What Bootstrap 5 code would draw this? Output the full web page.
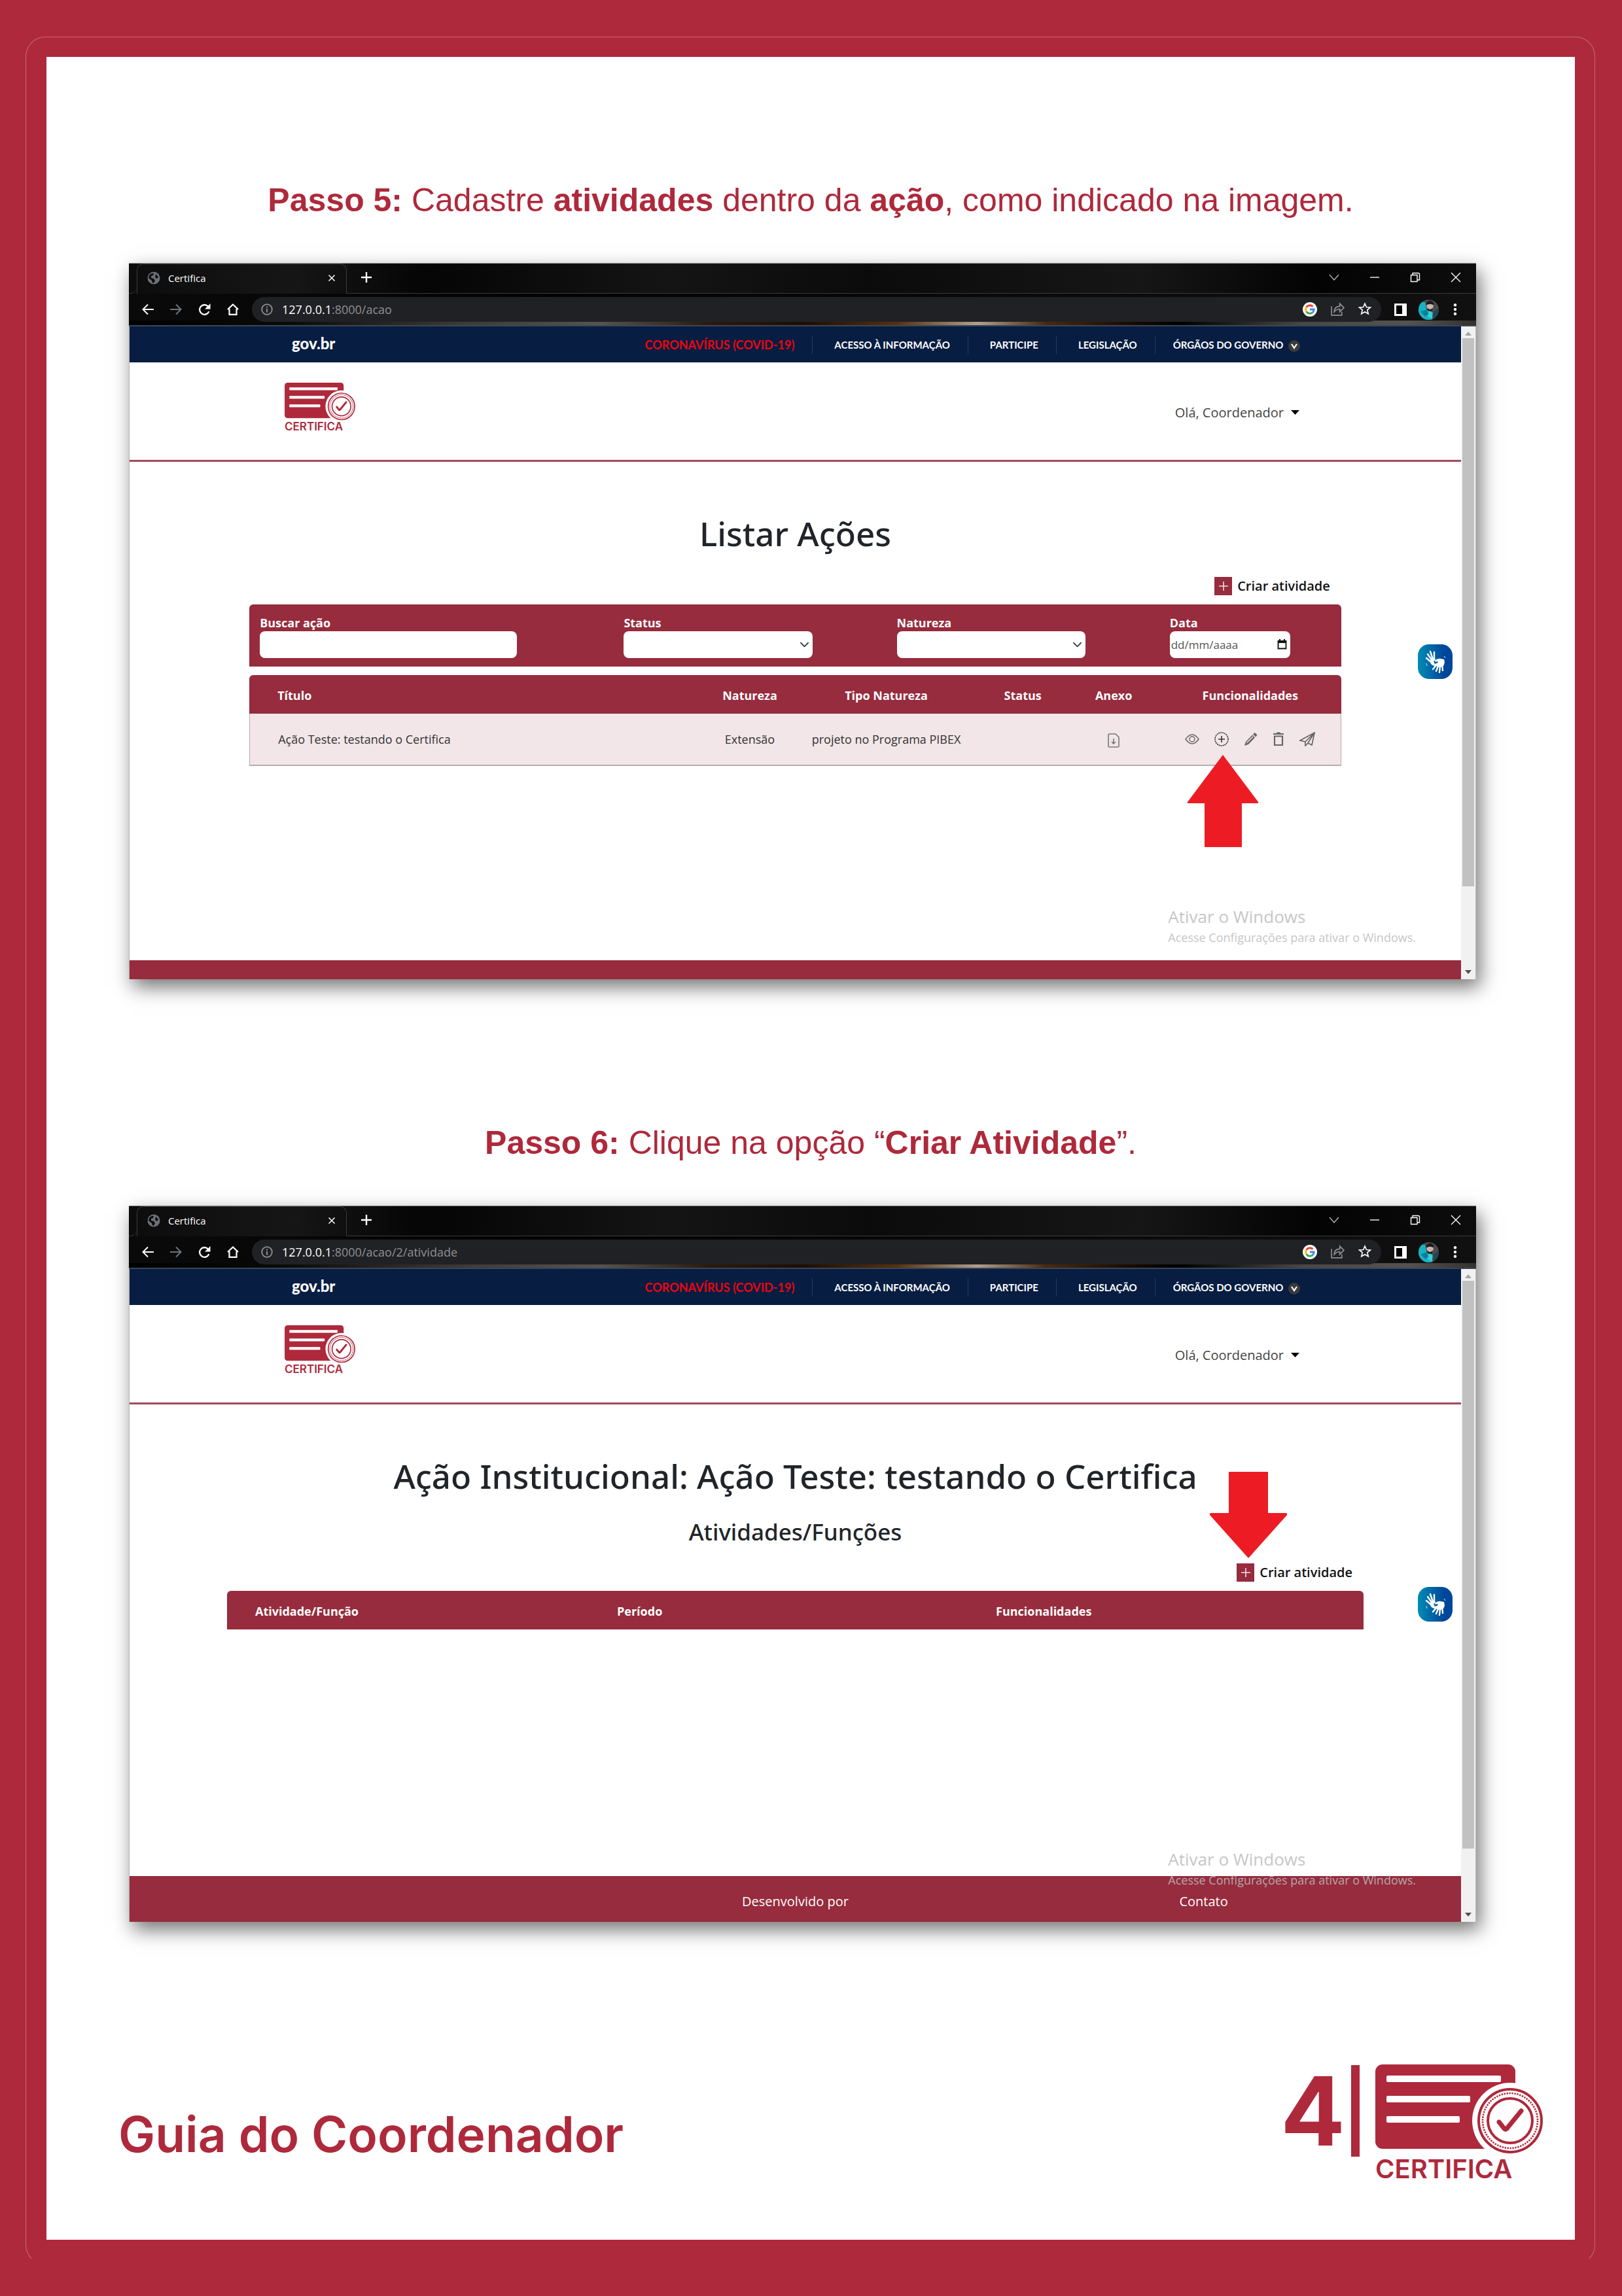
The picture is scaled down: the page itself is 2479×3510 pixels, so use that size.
<!DOCTYPE html>
<html lang="pt-BR">
<head>
<meta charset="utf-8">
<meta name="viewport" content="width=device-width, initial-scale=1">
<title>Guia do Coordenador - Certifica</title>
<link href="https://cdn.jsdelivr.net/npm/bootstrap@5.3.0/dist/css/bootstrap.min.css" rel="stylesheet">
<style>
  :root { --brand: #ae293b; --wine: #962c3d; --navy: #071d41; }
  body { background: #fff; font-family: "Open Sans", "Noto Sans", sans-serif; color: #212529; }
  .sheet { background: var(--brand); padding: 87px 72px 88px 71px; }
  .sheet::before { content: ""; position: absolute; inset: 56px 41px 50px 39px; border: 1px solid rgba(255,255,255,.3); border-bottom-color: transparent; border-radius: 30px; }
  .paper { background: #fff; padding: 189px 151px 88px 126px; }
  .step { font: 400 50px/60px "Liberation Sans", Arial, sans-serif; color: var(--brand); text-align: center; margin: 0 -25px 66px 0; }
  .step-next { margin-top: 220px; }

  /* browser window */
  .browser { box-shadow: 6px 12px 28px rgba(0,0,0,.55); border-top: 1px solid #8a8a8a; }
  .tabstrip { background: linear-gradient(90deg, #0c0c0c, #161616 12%, #050505 22%, #141414 40%, #0b0b0b 55%, #161616 75%, #030303 88%, #0d0d0d); height: 46px; color: #fff; }
  .tab-edge { width: 12px; border-bottom: 1px solid #3a3a3a; border-right: 0; border-radius: 0 0 10px 0; }
  .tab-open { width: 321px; padding: 0 16px 3px 15px; border: 1px solid #3a3a3a; border-bottom: 0; border-radius: 10px 10px 0 0; font-size: 15px; gap: 12px; }
  .tab-rest { border-bottom: 1px solid #3a3a3a; padding: 0 23px 4px 22px; }
  .wbtn { background: none; border: 0; padding: 0; line-height: 0; color: inherit; }
  .toolbar { height: 50px; padding: 0 25px 0 20px; color: #fff; border-bottom: 2px solid #3c4659;
    background: linear-gradient(90deg, #000 0, #0d0b09 12%, #3b3733 24%, #57534e 35%, #2b1a0e 43%, #1d0e04 50%, #57300f 57%, #b0a08e 63%, #4a2a0e 68%, #1a0d04 74%, #000 78%, #4a4643 87%, #55524f 95%, #33302e 100%) bottom/100% 7px no-repeat, linear-gradient(90deg, #0a0a0a, #020202 30%, #101010); }
  .navbtns { gap: 25px; width: 168px; }
  .omnibox { background: #202124; border-radius: 19px; height: 38px; padding: 0 15px 0 14px; gap: 14px; font-size: 18px; color: #8d9094; }
  .omnibox b { font-weight: 400; color: #fff; }
  .omni-icons { gap: 21px; }
  .tool-icons { gap: 18px; padding-left: 20px; }
  .viewport-row { min-height: 998px; }
  .page-side { border-left: 1px solid #b5b5b5; background: #fff; }
  .scroller { flex: 0 0 23px; background: #f1f1f1; padding: 8px 2px; border-right: 1px solid #bbb; }
  .thumb { background: #c1c1c1; width: 100%; height: 838px; margin: 4px 0 auto; }
  .thumb-long { height: 868px; }

  /* site */
  .govbar { background: var(--navy); height: 55px; padding: 0 246px 0 248px; }
  .govlogo { font: 900 24px/50px Lato, sans-serif; color: #fff; text-decoration: none; padding-bottom: 3px; }
  .govlinks a { font: 700 15px/28px Lato, sans-serif; color: #fff; text-decoration: none; display: block; padding: 0 27px 0 33px; border-right: 1px solid #2b3b5c; }
  .govlinks li:first-child a { color: #ee0410; font-size: 18px; }
  .govlinks li:last-child a { padding: 0; padding-left: 27px; border: 0; }
  .sitehead { height: 152px; border-bottom: 3px solid #a14a59; padding: 0 247px 0 237px; }
  .brandmark { color: var(--brand); font-family: Inter, sans-serif; font-weight: 600; }
  .brandmark svg { display: block; }
  .brandmark-sm { width: 108px; font-size: 17px; line-height: 17px; padding-bottom: 12px; }
  .brandmark-lg { width: 256px; font-size: 40px; line-height: 40px; }
  .hello { background: none; border: 0; padding: 5px 0 0; font-size: 20px; line-height: 30px; color: #444; gap: 11px; }
  .inner { padding: 77px 9% 0; }
  .inner-wide { padding: 77px 149px 0; }
  .ttl { font: 500 51px/64px "Noto Sans", sans-serif; text-align: center; margin: 0; }
  .subttl { font: 500 35px/44px "Noto Sans", sans-serif; text-align: center; margin: 32px 0 0; }
  .create { gap: 8px; color: #111; font-size: 20px; line-height: 28px; font-weight: 600; text-decoration: none; margin-right: 17px; }
  .create span { background: var(--wine); width: 27px; height: 28px; }
  .filters { background: var(--wine); border-radius: 6px 6px 0 0; padding: 15px 0 13px; margin-bottom: 13px; --bs-gutter-x: 32px; }
  .filters label { color: #fff; font-weight: 700; font-size: 18px; line-height: 26px; display: block; }
  .filters .form-control, .filters .form-select { width: 75%; height: 41px; border: 0; border-radius: 8px; padding: 0 2px; font-size: 17px; background-color: #fff; }
  .filters .form-select { background-size: 15px; background-position: right 5px center; }
  .filters .datebox { width: 75%; }
  .filters .datebox .form-control { width: 100%; }
  .datebox svg { position: absolute; right: 5px; top: 12px; }
  .form-control::placeholder { color: #555; }
  .grid { width: 100%; table-layout: fixed; border-collapse: separate; border-spacing: 0; }
  .grid th { background: var(--wine); color: #fff; font-weight: 700; font-size: 18px; height: 59px; padding: 4px 0 0 17px; }
  .grid th:first-child { border-radius: 6px 0 0 0; }
  .grid th:last-child { border-radius: 0 6px 0 0; }
  .grid th:first-child, .grid td:first-child { padding-left: 43px; }
  .grid td { background: #f2e6e8; height: 80px; font-size: 18px; color: #333; border-bottom: 2px solid #b5acae; white-space: nowrap; }
  .grid td:first-child { border-left: 1px solid #b5acae; }
  .grid td:last-child { border-right: 1px solid #b5acae; }
  .grid-center th:not(:first-child) { text-align: center; padding-left: 0; }
  .acts { gap: 23px; color: #666; }
  .sitefoot { background: var(--wine); height: 29px; }
  .sitefoot-tall { height: 70px; padding: 8px 4% 0; color: #fff; font-size: 20px; }
  .vlibras { right: 13px; top: 486px; width: 53px; height: 53px; border: 0; border-radius: 17px; padding: 0; background: linear-gradient(90deg, #008cb4, #00479b 75%); }
  .winmark { left: 78%; bottom: 48px; color: #bdbdbd; font-size: 18px; line-height: 32px; white-space: nowrap; opacity: .85; }
  .winmark strong { font-weight: 400; font-size: 26px; display: block; }
  .arrow-up { right: 309px; top: 654px; }
  .arrow-down { right: 266px; top: 310px; }

  /* sheet footer */
  .colophon { margin: 218px -102px 0 -16px; color: var(--brand); font-family: Inter, sans-serif; }
  .guide { font-size: 75px; line-height: 88px; font-weight: 600; margin-bottom: 29px; }
  .pagenum { font-size: 146px; line-height: 140px; font-weight: 700; gap: 9px; padding-top: 1px; }
  .pagenum i { width: 13px; height: 140px; background: var(--brand); }
</style>
</head>
<body>
<svg width="0" height="0" class="position-absolute" aria-hidden="true">
  <symbol id="certifica" viewBox="0 0 256 140">
    <rect width="214" height="129" rx="11" fill="#ae293b"/>
    <rect x="17" y="17" width="175" height="10" rx="2" fill="#fff"/>
    <rect x="17" y="48" width="128" height="10" rx="2" fill="#fff"/>
    <rect x="17" y="79" width="112" height="10" rx="2" fill="#fff"/>
    <circle cx="206" cy="86" r="58" fill="#fff"/>
    <g fill="none" stroke="#ae293b">
      <circle cx="206" cy="86" r="48" stroke-width="4"/>
      <circle cx="206" cy="86" r="42" stroke-width="2.6" stroke-dasharray="2.4 1.6"/>
      <circle cx="206" cy="86" r="34" stroke-width="4"/>
      <path d="M189 88l8 10q2 2 4 0l22-27" stroke-width="7" stroke-linecap="round" stroke-linejoin="round"/>
    </g>
  </symbol>
  <symbol id="globe" viewBox="0 0 20 20"><circle cx="10" cy="10" r="9.5" fill="#6d7177"/><path d="M3 6q3-4 7-3l-1 3-3 1v3l4 1 2 3-2 4q-3-1-3-4L2 10zM13 4l4 4-2 3-3-2z" fill="#0d0d0d"/></symbol>
  <symbol id="x" viewBox="0 0 16 16"><path d="M2 2l12 12M14 2L2 14" stroke="currentColor" stroke-width="2" fill="none"/></symbol>
  <symbol id="xthin" viewBox="0 0 16 16"><path d="M1 1l14 14M15 1L1 15" stroke="currentColor" stroke-width="1.4" fill="none"/></symbol>
  <symbol id="plus" viewBox="0 0 16 16"><path d="M8 0v16M0 8h16" stroke="currentColor" stroke-width="2.4" fill="none"/></symbol>
  <symbol id="chev" viewBox="0 0 16 16"><path d="M1 4l7 8 7-8" stroke="#bbb" stroke-width="1.3" fill="none"/></symbol>
  <symbol id="restore" viewBox="0 0 16 16"><path d="M1.500 4.500h9.500v10h-9.500zM4 4V1.500h8.500q2 0 2 2V12H11" stroke="currentColor" stroke-width="1.4" fill="none"/></symbol>
  <symbol id="back" viewBox="0 0 18 18"><path d="M18 9H2M9 1.500L1.500 9 9 16.500" stroke="currentColor" stroke-width="2" fill="none"/></symbol>
  <symbol id="fwd" viewBox="0 0 18 18"><path d="M0 9h16M9 1.500L16.500 9 9 16.500" stroke="currentColor" stroke-width="2" fill="none"/></symbol>
  <symbol id="reload" viewBox="0 0 18 18"><path d="M15.500 11.500A7 7 0 1 1 14 4" stroke="currentColor" stroke-width="2.200" fill="none"/><path d="M17.500 0v8h-8z" fill="currentColor"/></symbol>
  <symbol id="home" viewBox="0 0 18 18"><path d="M1 9l8-7.500L17 9M3.500 8v8.800h11V8" stroke="currentColor" stroke-width="2.200" fill="none"/></symbol>
  <symbol id="info" viewBox="0 0 18 18"><circle cx="9" cy="9" r="7.800" stroke="currentColor" stroke-width="1.800" fill="none"/><path d="M9 8v5.500M9 4.500v2" stroke="currentColor" stroke-width="2"/></symbol>
  <symbol id="goog" viewBox="0 0 22 22"><circle cx="11" cy="11" r="11" fill="#fff"/><g fill="none" stroke-width="2.800"><path d="M5.600 7.800A6.200 6.200 0 0 1 15.500 6.800" stroke="#ea4335"/><path d="M5.600 14.200a6.200 6.200 0 0 1 0-6.400" stroke="#fbbc05"/><path d="M5.600 14.200a6.200 6.200 0 0 0 9.600 1.400" stroke="#34a853"/><path d="M11 11h6.200q0 3-2 4.600" stroke="#4285f4"/></g></symbol>
  <symbol id="share" viewBox="0 0 20 20"><path d="M1 6v13h15v-5M5 14q0-8 8-8V2l6 6-6 6v-4q-5 0-8 4z" stroke="currentColor" stroke-width="1.600" fill="none"/></symbol>
  <symbol id="star" viewBox="0 0 20 20"><path d="M10 2l2.400 5.500 6 .500-4.600 3.900 1.400 5.900-5.200-3.100-5.200 3.100 1.400-5.900L1.600 8l6-.500z" stroke="currentColor" stroke-width="1.700" fill="none"/></symbol>
  <symbol id="panel" viewBox="0 0 19 19"><path d="M1.500 1.500h16v16h-16z" stroke="#fff" stroke-width="3" fill="#000"/><path d="M12 1h6v17h-6z" fill="#fff"/></symbol>
  <symbol id="face" viewBox="0 0 30 30"><clipPath id="fc"><circle cx="15" cy="15" r="15"/></clipPath><g clip-path="url(#fc)"><path d="M0 0h30v30H0z" fill="#4d4a4c"/><path d="M0 3l10 1 2 12 7 1 2 13H0z" fill="#16b3c4"/><path d="M3 18l8-3 4 6-5 4z" fill="#0b7f95"/><ellipse cx="17" cy="9" rx="5" ry="7" fill="#c9b4ae"/><path d="M11 6q6-9 12 0l-1 2q-5-3-10 0zM13 12q4 5 8 0l-1 5h-6z" fill="#191b20"/><path d="M15 17l6 2-1 9-6-2z" fill="#35d0dc"/><path d="M22 18l8-5v17h-8z" fill="#23474f"/></g></symbol>
  <symbol id="dots" viewBox="0 0 6 18"><g fill="#fff"><circle cx="3" cy="2.200" r="2.200"/><circle cx="3" cy="9" r="2.200"/><circle cx="3" cy="15.800" r="2.200"/></g></symbol>
  <symbol id="hands" viewBox="0 0 34 36"><g fill="none" stroke="#fff" stroke-linecap="round"><path d="M12 16L5 6M13 14L9 2M15 14V3M10 18L3 12" stroke-width="2.400"/><path d="M21 24l-3 8M24 24l-1 10M27 22l1 9M18 23l-5 6" stroke-width="2.400"/></g><path d="M9 15q4-4 7-3l1 3-3 2 2 4 4-1q0 4-3 4-6 0-8-5zM16 16q4-4 9-3l5 1q2 6-1 10-6 4-11 0l-2-3 5-2-1-2-3 1z" fill="#fff"/><path d="M3 20l1 4M32 12l-2-3" stroke="#9fd0e6" stroke-width="1.200"/></symbol>
</svg>

<div class="sheet position-relative">
<main class="paper position-relative">

  <h1 class="step"><b>Passo 5:</b> Cadastre <b>atividades</b> dentro da <b>ação</b>, como indicado na imagem.</h1>

  <section class="browser">
    <div class="tabstrip d-flex">
      <div class="tab-edge"></div>
      <div class="tab-open d-flex align-items-center">
        <svg width="20" height="20"><use href="#globe"/></svg><span class="flex-grow-1">Certifica</span>
        <button class="wbtn" aria-label="Fechar guia"><svg width="12" height="12"><use href="#x"/></svg></button>
      </div>
      <div class="tab-rest flex-grow-1 d-flex align-items-center">
        <button class="wbtn me-auto" aria-label="Nova guia"><svg width="16" height="16"><use href="#plus"/></svg></button>
        <div class="d-flex" style="gap:46px">
          <button class="wbtn" aria-label="Pesquisar guias"><svg width="16" height="16"><use href="#chev"/></svg></button>
          <button class="wbtn" aria-label="Minimizar"><svg width="16" height="16"><path d="M1 8h14" stroke="#ddd" stroke-width="1.600"/></svg></button>
          <button class="wbtn" aria-label="Restaurar"><svg width="16" height="16"><use href="#restore"/></svg></button>
          <button class="wbtn" aria-label="Fechar"><svg width="16" height="16"><use href="#xthin"/></svg></button>
        </div>
      </div>
    </div>
    <div class="toolbar d-flex align-items-center">
      <div class="navbtns d-flex">
        <button class="wbtn" aria-label="Voltar"><svg width="18" height="18"><use href="#back"/></svg></button>
        <button class="wbtn text-secondary" aria-label="Avançar"><svg width="18" height="18"><use href="#fwd"/></svg></button>
        <button class="wbtn" aria-label="Recarregar"><svg width="19" height="19"><use href="#reload"/></svg></button>
        <button class="wbtn" aria-label="Início"><svg width="18" height="18"><use href="#home"/></svg></button>
      </div>
      <div class="omnibox flex-grow-1 d-flex align-items-center">
        <svg width="18" height="18"><use href="#info"/></svg>
        <span class="flex-grow-1"><b>127.0.0.1</b>:8000/acao</span>
        <div class="omni-icons d-flex"><svg width="22" height="22"><use href="#goog"/></svg><svg width="21" height="21"><use href="#share"/></svg><svg width="20" height="20" class="text-light"><use href="#star"/></svg></div>
      </div>
      <div class="tool-icons d-flex align-items-center"><svg width="19" height="19"><use href="#panel"/></svg><svg width="31" height="31"><use href="#face"/></svg><svg width="14" height="18"><use href="#dots"/></svg></div>
    </div>
    <div class="viewport-row d-flex">
      <div class="page-side position-relative flex-grow-1 d-flex flex-column">
        <nav class="govbar d-flex align-items-center justify-content-between">
          <a class="govlogo" href="#">gov.br</a>
          <ul class="govlinks list-unstyled d-flex align-items-center mb-0">
            <li><a href="#">CORONAVÍRUS (COVID-19)</a></li>
            <li><a href="#">ACESSO À INFORMAÇÃO</a></li>
            <li><a href="#">PARTICIPE</a></li>
            <li><a href="#">LEGISLAÇÃO</a></li>
            <li><a href="#">ÓRGÃOS DO GOVERNO <svg width="18" height="18" class="ms-1"><circle cx="9" cy="9" r="9" fill="#3b3b3b"/><path d="M5 6l4 6 4-6" stroke="#fff" stroke-width="2.200" fill="none"/></svg></a></li>
          </ul>
        </nav>
        <header class="sitehead d-flex align-items-center justify-content-between">
          <div class="brandmark brandmark-sm"><svg width="108" height="59"><use href="#certifica"/></svg>CERTIFICA</div>
          <button class="hello d-flex align-items-center">Olá, Coordenador <svg width="13" height="8"><path d="M0 0h13L6.500 7z"/></svg></button>
        </header>
        <div class="inner flex-grow-1">
          <h2 class="ttl">Listar Ações</h2>
          <div class="d-flex justify-content-end" style="margin:35px 0 14px">
            <a class="create d-flex" href="#"><span class="d-flex align-items-center justify-content-center"><svg width="14" height="14"><path d="M7 0v14M0 7h14" stroke="#f3dfe2" stroke-width="1.600"/></svg></span>Criar atividade</a>
          </div>
          <form class="filters row mx-0">
            <div class="col-4"><label for="busca">Buscar ação</label><input id="busca" class="form-control" type="text"></div>
            <div class="col-3"><label for="status">Status</label><select id="status" class="form-select"><option></option></select></div>
            <div class="col-3"><label for="natureza">Natureza</label><select id="natureza" class="form-select"><option></option></select></div>
            <div class="col-2"><label for="data">Data</label><div class="datebox position-relative"><input id="data" class="form-control" type="text" placeholder="dd/mm/aaaa"><svg width="15" height="16"><path d="M1.500 3h12v11.500h-12z" fill="none" stroke="#111" stroke-width="1.800"/><path d="M1 2h13v4H1zM3 0h2v3H3zM10 0h2v3h-2z" fill="#111"/></svg></div></div>
          </form>
          <table class="grid grid-center">
            <colgroup><col style="width:41.667%"><col style="width:8.333%"><col style="width:16.667%"><col style="width:8.333%"><col style="width:8.333%"><col style="width:16.667%"></colgroup>
            <thead><tr><th>Título</th><th>Natureza</th><th>Tipo Natureza</th><th>Status</th><th>Anexo</th><th>Funcionalidades</th></tr></thead>
            <tbody><tr>
              <td>Ação Teste: testando o Certifica</td><td class="text-center">Extensão</td><td class="text-center">projeto no Programa PIBEX</td><td></td>
              <td class="text-center"><svg width="18" height="22" fill="none" stroke="#777" stroke-width="1.600"><path d="M1 3q0-2 2-2h9l5 5v13q0 2-2 2H3q-2 0-2-2zM9 8v8M6 13l3 3 3-3"/></svg></td>
              <td><div class="acts d-flex justify-content-center align-items-center">
                <svg width="22" height="16" fill="none" stroke="currentColor" stroke-width="1.500"><path d="M1 8q10-14 20 0-10 14-20 0z"/><circle cx="11" cy="8" r="4"/></svg>
                <svg width="22" height="22" fill="none" stroke="#333" stroke-width="1.600"><circle cx="11" cy="11" r="10" stroke-dasharray="2 1"/><path d="M11 6v10M6 11h10"/></svg>
                <svg width="21" height="21"><path d="M1 20l2-6L13 3.500l4 4L7 18z" fill="currentColor"/><path d="M14 2.500l2-2q1-.5 2 .500l2 2q.5 1-.500 2l-1.500 1.500z" fill="currentColor"/><path d="M4.500 15.500L14 6" stroke="#f2e6e8" stroke-width="1.400"/></svg>
                <svg width="18" height="22" fill="none" stroke="currentColor" stroke-width="2.200"><path d="M3 6.500h12V20H3zM1 3h16M6 1.500h6"/></svg>
                <svg width="24" height="22" fill="none" stroke="currentColor" stroke-width="1.700"><path d="M1 13L23 1l-4 19-6-3-4 4v-6zM9 15L22 2M13 17l8-13"/></svg>
              </div></td>
            </tr></tbody>
          </table>
        </div>
        <footer class="sitefoot"></footer>
        <div class="winmark position-absolute"><strong>Ativar o Windows</strong>Acesse Configurações para ativar o Windows.</div>
        <button class="vlibras position-absolute" aria-label="VLibras"><svg width="34" height="36"><use href="#hands"/></svg></button>
        <svg class="arrow-up position-absolute" width="110" height="142"><path d="M55 1l54 72q1 2-1 2H84v67H27V75H2q-2 0-1-2z" fill="#ed1c24"/></svg>
      </div>
      <div class="scroller d-flex flex-column align-items-center"><svg width="10" height="6"><path d="M0 6h10L5 0z" fill="#a3a3a3"/></svg><div class="thumb"></div><svg width="10" height="6"><path d="M0 0h10L5 6z" fill="#505050"/></svg></div>
    </div>
  </section>

  <h1 class="step step-next"><b>Passo 6:</b> Clique na opção “<b>Criar Atividade</b>”.</h1>

  <section class="browser">
    <div class="tabstrip d-flex">
      <div class="tab-edge"></div>
      <div class="tab-open d-flex align-items-center">
        <svg width="20" height="20"><use href="#globe"/></svg><span class="flex-grow-1">Certifica</span>
        <button class="wbtn" aria-label="Fechar guia"><svg width="12" height="12"><use href="#x"/></svg></button>
      </div>
      <div class="tab-rest flex-grow-1 d-flex align-items-center">
        <button class="wbtn me-auto" aria-label="Nova guia"><svg width="16" height="16"><use href="#plus"/></svg></button>
        <div class="d-flex" style="gap:46px">
          <button class="wbtn" aria-label="Pesquisar guias"><svg width="16" height="16"><use href="#chev"/></svg></button>
          <button class="wbtn" aria-label="Minimizar"><svg width="16" height="16"><path d="M1 8h14" stroke="#ddd" stroke-width="1.600"/></svg></button>
          <button class="wbtn" aria-label="Restaurar"><svg width="16" height="16"><use href="#restore"/></svg></button>
          <button class="wbtn" aria-label="Fechar"><svg width="16" height="16"><use href="#xthin"/></svg></button>
        </div>
      </div>
    </div>
    <div class="toolbar d-flex align-items-center">
      <div class="navbtns d-flex">
        <button class="wbtn" aria-label="Voltar"><svg width="18" height="18"><use href="#back"/></svg></button>
        <button class="wbtn text-secondary" aria-label="Avançar"><svg width="18" height="18"><use href="#fwd"/></svg></button>
        <button class="wbtn" aria-label="Recarregar"><svg width="19" height="19"><use href="#reload"/></svg></button>
        <button class="wbtn" aria-label="Início"><svg width="18" height="18"><use href="#home"/></svg></button>
      </div>
      <div class="omnibox flex-grow-1 d-flex align-items-center">
        <svg width="18" height="18"><use href="#info"/></svg>
        <span class="flex-grow-1"><b>127.0.0.1</b>:8000/acao/2/atividade</span>
        <div class="omni-icons d-flex"><svg width="22" height="22"><use href="#goog"/></svg><svg width="21" height="21"><use href="#share"/></svg><svg width="20" height="20" class="text-light"><use href="#star"/></svg></div>
      </div>
      <div class="tool-icons d-flex align-items-center"><svg width="19" height="19"><use href="#panel"/></svg><svg width="31" height="31"><use href="#face"/></svg><svg width="14" height="18"><use href="#dots"/></svg></div>
    </div>
    <div class="viewport-row d-flex">
      <div class="page-side position-relative flex-grow-1 d-flex flex-column">
        <nav class="govbar d-flex align-items-center justify-content-between">
          <a class="govlogo" href="#">gov.br</a>
          <ul class="govlinks list-unstyled d-flex align-items-center mb-0">
            <li><a href="#">CORONAVÍRUS (COVID-19)</a></li>
            <li><a href="#">ACESSO À INFORMAÇÃO</a></li>
            <li><a href="#">PARTICIPE</a></li>
            <li><a href="#">LEGISLAÇÃO</a></li>
            <li><a href="#">ÓRGÃOS DO GOVERNO <svg width="18" height="18" class="ms-1"><circle cx="9" cy="9" r="9" fill="#3b3b3b"/><path d="M5 6l4 6 4-6" stroke="#fff" stroke-width="2.200" fill="none"/></svg></a></li>
          </ul>
        </nav>
        <header class="sitehead d-flex align-items-center justify-content-between">
          <div class="brandmark brandmark-sm"><svg width="108" height="59"><use href="#certifica"/></svg>CERTIFICA</div>
          <button class="hello d-flex align-items-center">Olá, Coordenador <svg width="13" height="8"><path d="M0 0h13L6.500 7z"/></svg></button>
        </header>
        <div class="inner-wide flex-grow-1">
          <h2 class="ttl">Ação Institucional: Ação Teste: testando o Certifica</h2>
          <h3 class="subttl">Atividades/Funções</h3>
          <div class="d-flex justify-content-end" style="margin:26px 0 14px">
            <a class="create d-flex" href="#"><span class="d-flex align-items-center justify-content-center"><svg width="14" height="14"><path d="M7 0v14M0 7h14" stroke="#f3dfe2" stroke-width="1.600"/></svg></span>Criar atividade</a>
          </div>
          <table class="grid"><thead><tr><th>Atividade/Função</th><th>Período</th><th>Funcionalidades</th></tr></thead></table>
        </div>
        <footer class="sitefoot sitefoot-tall d-flex align-items-center text-center"><div class="col-4"></div><div class="col-4">Desenvolvido por</div><div class="col-4">Contato</div></footer>
        <div class="winmark position-absolute"><strong>Ativar o Windows</strong>Acesse Configurações para ativar o Windows.</div>
        <button class="vlibras position-absolute" aria-label="VLibras"><svg width="34" height="36"><use href="#hands"/></svg></button>
        <svg class="arrow-down position-absolute" width="118" height="132"><path d="M29 0h60v63h27q3 0 2 3L59 132 0 66q-1-3 2-3h27z" fill="#ed1c24"/></svg>
      </div>
      <div class="scroller d-flex flex-column align-items-center"><svg width="10" height="6"><path d="M0 6h10L5 0z" fill="#a3a3a3"/></svg><div class="thumb thumb-long"></div><svg width="10" height="6"><path d="M0 0h10L5 6z" fill="#505050"/></svg></div>
    </div>
  </section>

  <footer class="colophon d-flex align-items-end">
    <div class="guide me-auto">Guia do Coordenador</div>
    <div class="pagenum d-flex align-self-start">4<i></i></div>
    <div class="brandmark brandmark-lg ms-4"><svg width="256" height="140"><use href="#certifica"/></svg>CERTIFICA</div>
  </footer>
</main>
</div>
<script src="https://cdn.jsdelivr.net/npm/bootstrap@5.3.0/dist/js/bootstrap.bundle.min.js"></script>
</body>
</html>
